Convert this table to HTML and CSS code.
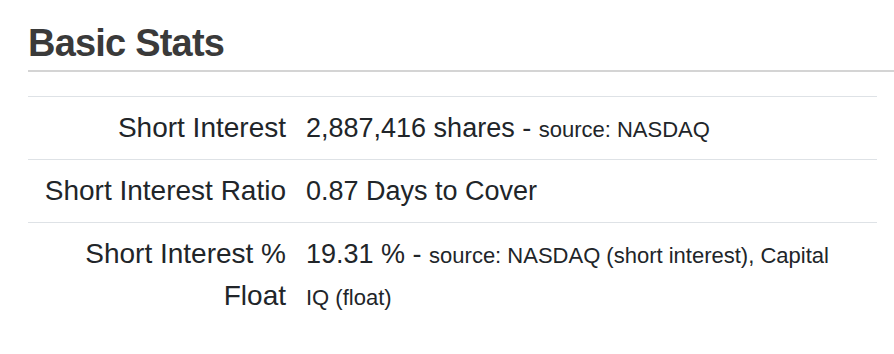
FILE: index.html
```html
<!DOCTYPE html>
<html>
<head>
<meta charset="utf-8">
<link rel="stylesheet" href="styles.css">
</head>
<body>
<section class="stats">
  <h2 class="stats-title">Basic Stats</h2>
  <table class="stats-table">
    <tbody>
      <tr>
        <th class="label">Short Interest</th>
        <td class="value">2,887,416 shares - <small class="src">source: NASDAQ</small></td>
      </tr>
      <tr>
        <th class="label">Short Interest Ratio</th>
        <td class="value">0.87 Days to Cover</td>
      </tr>
      <tr>
        <th class="label">Short Interest % Float</th>
        <td class="value">19.31 % - <small class="src">source: NASDAQ (short interest), Capital IQ (float)</small></td>
      </tr>
    </tbody>
  </table>
</section>
</body>
</html>
```
FILE: styles.css
```css
html, body {
  margin: 0;
  padding: 0;
  background: #ffffff;
}
body {
  font-family: "Liberation Sans", Arial, sans-serif;
  color: #212529;
}
.stats {
  padding: 0 0 0 28px;
}
.stats-title {
  margin: 21px 0 0 0;
  padding-bottom: 3px;
  font-size: 38px;
  line-height: 1.2;
  font-weight: bold;
  letter-spacing: -0.8px;
  color: #3a3a3a;
  border-bottom: 2px solid #d4d4d4;
}
.stats-table {
  margin-top: 24px;
  width: calc(100% - 17px);
  border-collapse: collapse;
  font-size: 28px;
  line-height: 42px;
}
.stats-table tr {
  border-top: 1px solid #dee2e6;
}
.label {
  width: 248px;
  padding: 10px;
  text-align: right;
  vertical-align: top;
  font-weight: normal;
  line-height: 42px;
}
.value {
  padding: 10px 22px 10px 10px;
  text-align: left;
  vertical-align: top;
  font-size: 27px;
  line-height: 42px;
}
.src {
  font-size: 22px;
  line-height: 1;
}
```
